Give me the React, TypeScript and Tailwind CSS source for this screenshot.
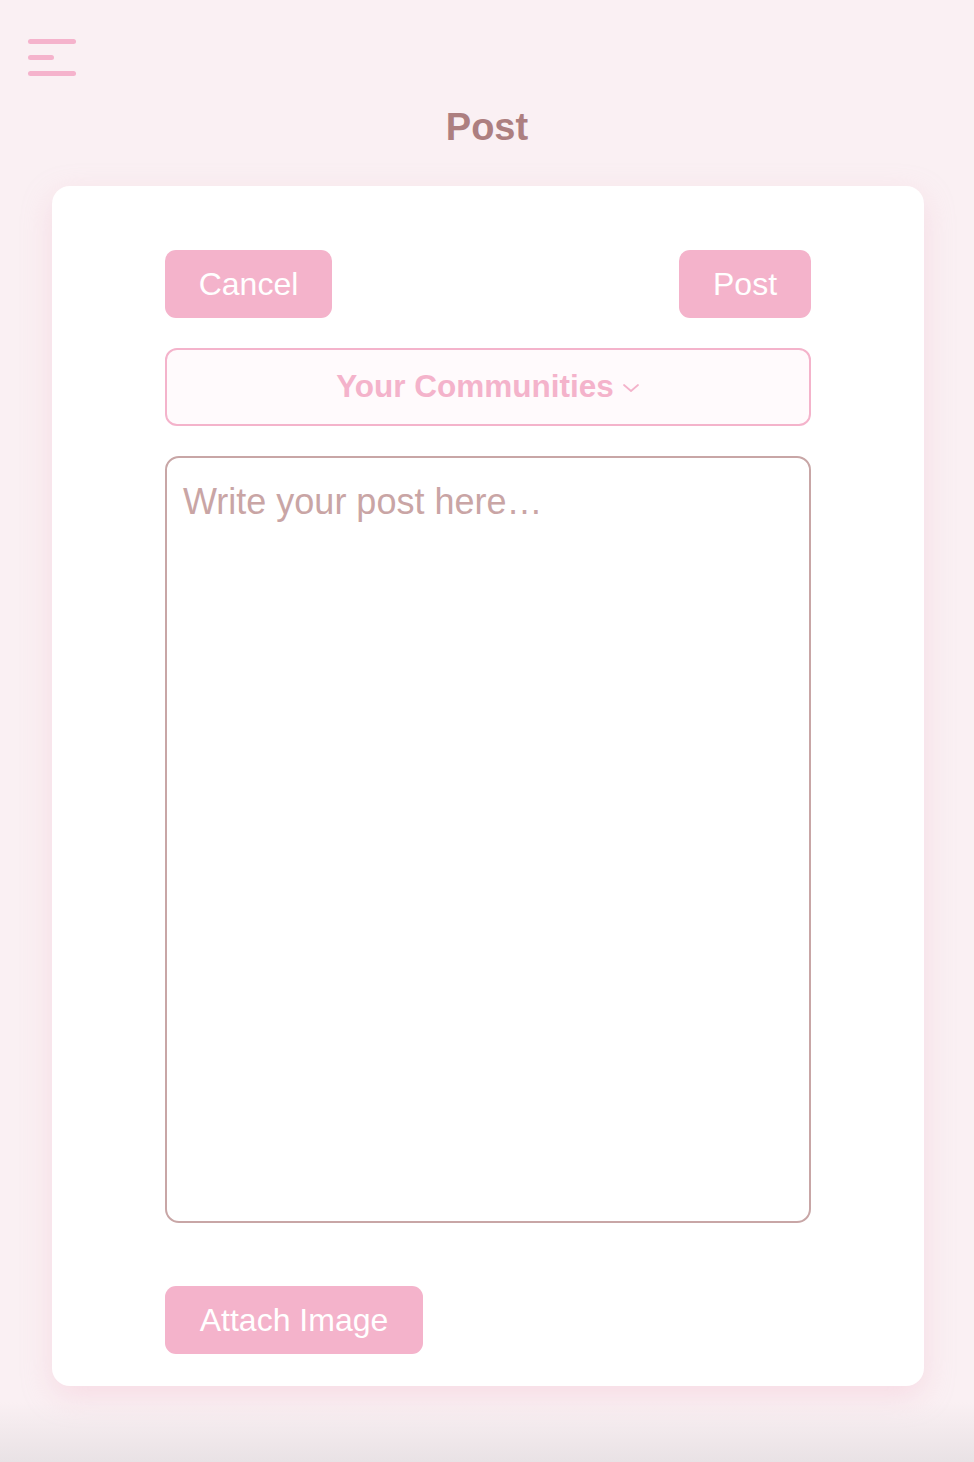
import React from 'react';

function MenuIcon() {
  return (
    <div className="flex flex-col gap-[11px] w-[48px]">
      <span className="block h-[5px] w-[48px] rounded-full bg-[#f5b3cc]" />
      <span className="block h-[5px] w-[26px] rounded-full bg-[#f5b3cc]" />
      <span className="block h-[5px] w-[48px] rounded-full bg-[#f5b3cc]" />
    </div>
  );
}

export default function App() {
  return (
    <div
      className="relative min-h-[1462px] w-full overflow-hidden bg-[#faf0f3]"
      style={{ fontFamily: '"Liberation Sans", Arial, sans-serif' }}
    >
      <header className="px-[28px] pt-[39px]">
        <button className="block">
          <MenuIcon />
        </button>
        <h1 className="mt-[29px] text-center text-[38px] font-bold leading-[44px] text-[#ad7f80]">Post</h1>
      </header>

      <main className="ml-[52px] mr-[50px] mt-[37px] rounded-[18px] bg-white px-[113px] pt-[64px] pb-[32px] shadow-[0_10px_30px_rgba(240,180,200,0.35)]">
        <div className="flex items-center justify-between">
          <button className="h-[68px] w-[167px] rounded-[11px] bg-[#f4b3cb] text-[32px] text-white">
            Cancel
          </button>
          <button className="h-[68px] w-[132px] rounded-[11px] bg-[#f4b3cb] text-[32px] text-white">
            Post
          </button>
        </div>

        <button className="mt-[30px] flex h-[78px] w-full items-center justify-center gap-[8px] rounded-[12px] border-2 border-[#f4b3cb] bg-[#fffafc] text-[31.5px] font-bold text-[#f4b3cb]">
          <span>Your Communities</span>
          <svg width="18" height="12" viewBox="0 0 18 12" fill="none" className="mt-[2px]">
            <path d="M2 3 L9 9 L16 3" stroke="#f4b3cb" strokeWidth="1.8" strokeLinecap="round" strokeLinejoin="round" />
          </svg>
        </button>

        <textarea
          placeholder="Write your post here…"
          className="mt-[30px] block h-[767px] w-full resize-none rounded-[14px] border-2 border-[#c8a6a6] bg-white px-[16px] pt-[22px] text-[36px] leading-[44px] text-[#8a6a6a] outline-none placeholder:text-[#c9a5a5]"
        />

        <button className="mt-[63px] h-[68px] w-[258px] rounded-[11px] bg-[#f4b3cb] text-[32px] text-white">
          Attach Image
        </button>
      </main>

      <div className="absolute bottom-0 left-0 right-0 h-[60px] bg-gradient-to-b from-transparent to-[#e9e2e5]" />
    </div>
  );
}
